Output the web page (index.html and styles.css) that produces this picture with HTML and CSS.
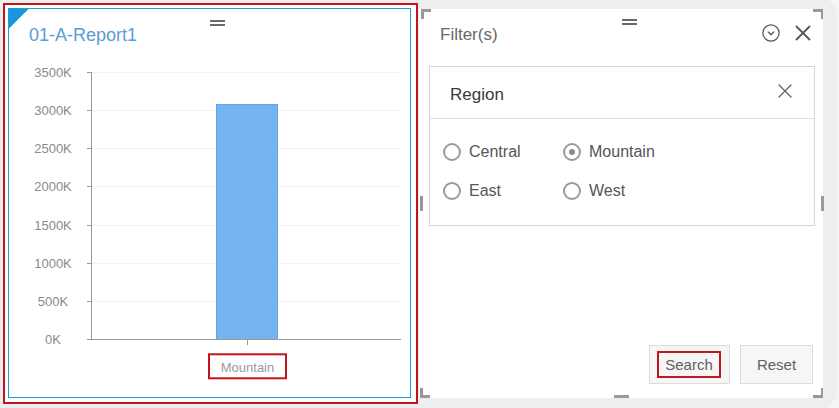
FILE: index.html
```html
<!DOCTYPE html>
<html>
<head>
<meta charset="utf-8">
<link rel="stylesheet" href="styles.css">
</head>
<body>
<div class="board">
  <div class="report-card">
    <div class="report-inner">
      <div class="corner-flag"></div>
      <div class="drag-handle drag-left"></div>
      <div class="report-title">01-A-Report1</div>
      <svg class="chart" width="401" height="351" viewBox="9 46 401 351">
        <g class="grid">
          <line x1="92" y1="72.5" x2="401" y2="72.5"/>
          <line x1="92" y1="110.5" x2="401" y2="110.5"/>
          <line x1="92" y1="148.5" x2="401" y2="148.5"/>
          <line x1="92" y1="186.5" x2="401" y2="186.5"/>
          <line x1="92" y1="225.5" x2="401" y2="225.5"/>
          <line x1="92" y1="263.5" x2="401" y2="263.5"/>
          <line x1="92" y1="301.5" x2="401" y2="301.5"/>
        </g>
        <rect class="bar" x="216.5" y="104.5" width="61" height="235"/>
        <g class="axis">
          <line x1="91.5" y1="72" x2="91.5" y2="340"/>
          <line x1="91" y1="339.5" x2="401" y2="339.5"/>
          <line x1="87" y1="72.5" x2="92" y2="72.5"/>
          <line x1="87" y1="110.5" x2="92" y2="110.5"/>
          <line x1="87" y1="148.5" x2="92" y2="148.5"/>
          <line x1="87" y1="186.5" x2="92" y2="186.5"/>
          <line x1="87" y1="225.5" x2="92" y2="225.5"/>
          <line x1="87" y1="263.5" x2="92" y2="263.5"/>
          <line x1="87" y1="301.5" x2="92" y2="301.5"/>
          <line x1="87" y1="339.5" x2="92" y2="339.5"/>
          <line x1="247.5" y1="340" x2="247.5" y2="345"/>
        </g>
        <g class="ylabels">
          <text x="53" y="76.5">3500K</text>
          <text x="53" y="114.5">3000K</text>
          <text x="53" y="152.5">2500K</text>
          <text x="53" y="190.5">2000K</text>
          <text x="53" y="229.5">1500K</text>
          <text x="53" y="267.5">1000K</text>
          <text x="53" y="305.5">500K</text>
          <text x="53" y="343.5">0K</text>
        </g>
        <text class="xlabel" x="247.5" y="372">Mountain</text>
        <rect class="mark" x="209" y="354.3" width="77" height="24"/>
      </svg>
    </div>
  </div>

  <div class="filter-panel">
    <span class="bracket tl"></span>
    <span class="bracket tr"></span>
    <span class="bracket bl"></span>
    <span class="bracket br"></span>
    <span class="side-grip left"></span>
    <span class="side-grip right"></span>
    <span class="bottom-grip"></span>
    <div class="drag-handle drag-right"></div>

    <div class="filter-head">
      <span class="filter-title">Filter(s)</span>
      <div class="head-icons">
        <svg width="18" height="18" viewBox="0 0 18 18" class="ico-collapse">
          <circle cx="9" cy="9" r="8.1" fill="none" stroke="#555" stroke-width="1.2"/>
          <path d="M6.3 8 L9 10.7 L11.7 8" fill="none" stroke="#555" stroke-width="1.3" stroke-linecap="round" stroke-linejoin="round"/>
        </svg>
        <svg width="16" height="16" viewBox="0 0 16 16" class="ico-close">
          <path d="M1.5 1.5 L14.5 14.5 M14.5 1.5 L1.5 14.5" stroke="#555" stroke-width="1.8" stroke-linecap="round"/>
        </svg>
      </div>
    </div>

    <div class="region-box">
      <div class="region-head">
        <span class="region-title">Region</span>
        <svg width="14" height="14" viewBox="0 0 14 14" class="ico-region-close">
          <path d="M1 1 L13 13 M13 1 L1 13" stroke="#666" stroke-width="1.4" stroke-linecap="round"/>
        </svg>
      </div>
      <div class="region-options">
        <label class="opt"><span class="radio"></span><span class="opt-text">Central</span></label>
        <label class="opt"><span class="radio checked"></span><span class="opt-text">Mountain</span></label>
        <label class="opt"><span class="radio"></span><span class="opt-text">East</span></label>
        <label class="opt"><span class="radio"></span><span class="opt-text">West</span></label>
      </div>
    </div>

    <div class="actions">
      <button class="btn btn-search"><span class="mark-box">Search</span></button>
      <button class="btn btn-reset">Reset</button>
    </div>
  </div>
</div>
</body>
</html>
```

FILE: styles.css
```css
html, body {
  margin: 0;
  padding: 0;
  overflow: hidden;
}
body {
  background: #f4f6f5;
  font-family: "Liberation Sans", Arial, sans-serif;
}
.board {
  width: 838px;
  height: 419px;
  margin-top: -6px;
  box-sizing: border-box;
  padding: 9px 0 0 3px;
  background: #eeeeee;
  border-radius: 0 26px 26px 0;
  display: flex;
  align-items: flex-start;
  gap: 1px;
}

/* ---------- report card ---------- */
.report-card {
  width: 415px;
  height: 401px;
  box-sizing: border-box;
  border: 2px solid #c1161d;
  background: #fff;
  padding: 3px 5px 4px 3px;
}
.report-inner {
  position: relative;
  height: 100%;
  box-sizing: border-box;
  border: 1px solid #1c9ddd;
  display: flex;
  flex-direction: column;
}
.corner-flag {
  position: absolute;
  left: 0;
  top: 0;
  width: 19px;
  height: 19px;
  background: linear-gradient(135deg, #1a96da 50%, transparent 50%);
}
.drag-handle {
  position: absolute;
  width: 15px;
  height: 6px;
  box-sizing: border-box;
  border-top: 2px solid #6a6a6a;
  border-bottom: 2px solid #6a6a6a;
}
.drag-left {
  left: 201px;
  top: 11px;
}
.report-title {
  padding: 15px 0 0 20px;
  font-size: 18px;
  line-height: 22px;
  color: #5a9bd7;
}
.chart {
  display: block;
}
.chart .grid line {
  stroke: #f1f1f1;
  stroke-width: 1;
}
.chart .axis line {
  stroke: #9a9a9a;
  stroke-width: 1;
}
.chart .bar {
  fill: #74b4f0;
  stroke: #5ea7ec;
  stroke-width: 1;
}
.chart .ylabels text {
  font-family: "Liberation Sans", Arial, sans-serif;
  font-size: 13px;
  fill: #8a8a8a;
  text-anchor: middle;
}
.chart .xlabel {
  font-family: "Liberation Sans", Arial, sans-serif;
  font-size: 13px;
  fill: #9a9a9a;
  text-anchor: middle;
}
.chart .mark {
  fill: none;
  stroke: #c1161d;
  stroke-width: 2;
}

/* ---------- filter panel ---------- */
.filter-panel {
  position: relative;
  margin-top: 6px;
  width: 404px;
  height: 389px;
  box-sizing: border-box;
  background: #fff;
  padding: 0 8px 14px 10px;
  display: flex;
  flex-direction: column;
}
.bracket {
  position: absolute;
  width: 10px;
  height: 10px;
  box-sizing: border-box;
  border: 0 solid #999;
}
.bracket.tl { left: 2px; top: 0; border-top-width: 3px; border-left-width: 3px; }
.bracket.tr { right: 0; top: 0; border-top-width: 3px; border-right-width: 2px; }
.bracket.bl { left: 1px; bottom: 0; border-bottom-width: 3px; border-left-width: 3px; }
.bracket.br { right: 0; bottom: 0; border-bottom-width: 3px; border-right-width: 2px; }
.side-grip {
  position: absolute;
  top: 187px;
  width: 3px;
  height: 15px;
  background: #999;
}
.side-grip.left { left: 1px; }
.side-grip.right { right: -1px; }
.bottom-grip {
  position: absolute;
  left: 195px;
  bottom: 0;
  width: 15px;
  height: 3px;
  background: #999;
}
.drag-right {
  left: 203px;
  top: 10px;
}
.filter-head {
  display: flex;
  align-items: center;
  justify-content: space-between;
  padding: 16px 0 0 11px;
  height: 20px;
}
.filter-title {
  font-size: 17px;
  line-height: 20px;
  color: #686868;
}
.head-icons {
  display: flex;
  align-items: center;
  gap: 15px;
  margin-right: 4px;
  margin-bottom: 4px;
}
.head-icons svg {
  display: block;
}
.region-box {
  margin-top: 21px;
  border: 1px solid #d6d6d6;
}
.region-head {
  display: flex;
  align-items: flex-start;
  justify-content: space-between;
  padding: 18px 22px 13px 20px;
  border-bottom: 1px solid #dedede;
}
.region-title {
  font-size: 17px;
  line-height: 20px;
  color: #3a3a3a;
}
.ico-region-close {
  display: block;
  margin-top: -1px;
}
.region-options {
  display: grid;
  grid-template-columns: 120px 120px;
  grid-auto-rows: 39px;
  padding: 13px 0 15px 13px;
}
.opt {
  display: flex;
  align-items: center;
}
.radio {
  width: 18px;
  height: 18px;
  box-sizing: border-box;
  border: 2px solid #9a9a9a;
  border-radius: 50%;
  display: flex;
  align-items: center;
  justify-content: center;
}
.radio.checked::after {
  content: "";
  width: 6px;
  height: 6px;
  border-radius: 50%;
  background: #8a8a8a;
}
.opt-text {
  margin-left: 8px;
  font-size: 16px;
  line-height: 20px;
  color: #555;
}
.actions {
  margin-top: auto;
  display: flex;
  justify-content: flex-end;
  gap: 10px;
  padding-right: 2px;
}
.btn {
  height: 39px;
  box-sizing: border-box;
  border: 1px solid #dcdcdc;
  background: #f6f6f6;
  font-family: "Liberation Sans", Arial, sans-serif;
  font-size: 15px;
  color: #606060;
  padding: 0;
  display: flex;
  align-items: center;
  justify-content: center;
}
.btn-search { width: 81px; }
.btn-reset { width: 73px; }
.mark-box {
  border: 2px solid #c1161d;
  padding: 0 6px;
  line-height: 23px;
  margin-right: 1px;
}
```
